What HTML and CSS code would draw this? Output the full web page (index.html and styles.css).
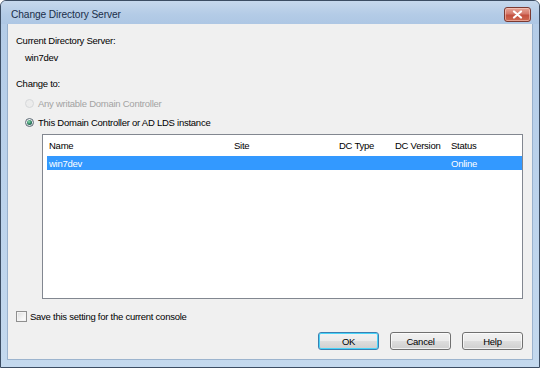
FILE: index.html
```html
<!DOCTYPE html>
<html>
<head>
<meta charset="utf-8">
<link rel="stylesheet" href="styles.css">
</head>
<body>
<div class="window">
  <div class="titlebar">
    <span class="title">Change Directory Server</span>
    <span class="close"><svg width="11" height="9" viewBox="0 0 11 9"><path d="M2 1.5 L9 7.5 M9 1.5 L2 7.5" stroke="#fff" stroke-width="2.2" stroke-linecap="round"/></svg></span>
  </div>
  <div class="client">
    <div class="line">Current Directory Server:</div>
    <div class="line value">win7dev</div>
    <div class="line change">Change to:</div>
    <div class="radio-row disabled"><span class="radio"></span><span>Any writable Domain Controller</span></div>
    <div class="radio-row second"><span class="radio checked"><span class="dot"></span></span><span>This Domain Controller or AD LDS instance</span></div>
    <div class="listbox">
      <div class="lv-row header">
        <span class="c-name">Name</span><span class="c-site">Site</span><span class="c-type">DC Type</span><span class="c-ver">DC Version</span><span class="c-status">Status</span>
      </div>
      <div class="lv-row selected">
        <span class="c-name">win7dev</span><span class="c-site"></span><span class="c-type"></span><span class="c-ver"></span><span class="c-status">Online</span>
      </div>
    </div>
    <div class="check-row"><span class="checkbox"></span><span>Save this setting for the current console</span></div>
    <div class="buttons">
      <button class="btn default">OK</button>
      <button class="btn">Cancel</button>
      <button class="btn">Help</button>
    </div>
  </div>
</div>
</body>
</html>
```
FILE: styles.css
```css
html, body {
  margin: 0;
  padding: 0;
  width: 540px;
  height: 368px;
  overflow: hidden;
  background: #fff;
}
.window {
  box-sizing: border-box;
  width: 540px;
  height: 368px;
  border: 1px solid #3c4d63;
  border-radius: 6px 6px 0 0;
  background: linear-gradient(to bottom, #bed3ea 0px, #b4cce7 24px, #bcd3ec 200px, #c4d9ee 100%);
  display: flex;
  flex-direction: column;
  font-family: "Liberation Sans", Arial, sans-serif;
  font-size: 9.5px;
  letter-spacing: -0.25px;
  color: #000;
}
.titlebar {
  height: 23px;
  flex: none;
  display: flex;
  align-items: center;
  padding: 0 0 0 10px;
  position: relative;
  background: linear-gradient(to bottom, #c6d8ec 0%, #b3cbe6 60%, #aec7e4 100%);
  border-radius: 5px 5px 0 0;
}
.title {
  font-size: 10.2px;
  letter-spacing: -0.1px;
  color: #1b2f4a;
  margin-top: 4px;
}
.close {
  position: absolute;
  left: 503px;
  top: 6px;
  width: 25px;
  height: 13px;
  border: 1px solid #7b3a32;
  border-radius: 3px;
  background: linear-gradient(to bottom, #e7a596 0%, #d5786a 45%, #c3503f 55%, #cf6a52 100%);
  display: flex;
  align-items: center;
  justify-content: center;
  box-shadow: inset 0 0 0 1px rgba(255,220,210,0.5);
}
.client {
  flex: 1;
  margin: 0 7px 8px 7px;
  background: #f0f0f0;
  border: 1px solid #8ea6c2;
  border-width: 0;
  box-shadow: 0 0 0 1px rgba(130,155,185,0.6);
  padding: 10px 9px 9px 8px;
  display: flex;
  flex-direction: column;
}
.line {
  height: 13px;
  line-height: 13px;
}
.value {
  margin-top: 4px;
  padding-left: 9px;
}
.change {
  margin-top: 13px;
}
.radio-row {
  height: 14px;
  display: flex;
  align-items: center;
  margin-top: 6px;
  padding-left: 9px;
}
.radio-row.second {
  margin-top: 5px;
}
.radio-row.disabled {
  color: #a3a3a3;
}
.radio {
  box-sizing: border-box;
  width: 9px;
  height: 9px;
  border-radius: 50%;
  border: 1px solid #a8acb2;
  background: radial-gradient(circle at 40% 35%, #ffffff 0%, #e4e6e8 70%, #d0d3d6 100%);
  margin-right: 4px;
  display: flex;
  align-items: center;
  justify-content: center;
}
.radio-row.disabled .radio {
  border-color: #d6d8da;
  background: #ececec;
}
.radio.checked {
  border-color: #5b6a74;
}
.dot {
  width: 5px;
  height: 5px;
  border-radius: 50%;
  background: radial-gradient(circle at 40% 35%, #8fe0b0 0%, #2a7a5c 55%, #173e44 100%);
}
.listbox {
  margin: 5px 0 0 26px;
  height: 165px;
  box-sizing: border-box;
  border: 1px solid #828790;
  background: #fff;
  flex: none;
}
.lv-row {
  display: flex;
  align-items: center;
}
.lv-row span {
  box-sizing: border-box;
  padding-left: 6px;
  white-space: nowrap;
}
.header {
  height: 21px;
}
.selected {
  height: 14px;
  margin: 0 0 0 4px;
  background: #3399ff;
  color: #fff;
}
.c-name { width: 185px; }
.c-site { width: 105px; }
.c-type { width: 56px; }
.c-ver { width: 56px; }
.c-status { flex: 1; }
.selected .c-name { width: 181px; padding-left: 2px; }
.check-row {
  margin-top: 10px;
  height: 14px;
  display: flex;
  align-items: center;
}
.checkbox {
  box-sizing: border-box;
  width: 11px;
  height: 11px;
  border: 1px solid #8f8f8f;
  background: linear-gradient(135deg, #dcdcdc 0%, #f4f4f4 60%, #ffffff 100%);
  box-shadow: inset 0 0 0 1px #f4f4f4;
  margin-right: 3px;
}
.buttons {
  margin-top: auto;
  display: flex;
  justify-content: flex-end;
  gap: 11px;
}
.btn {
  box-sizing: border-box;
  width: 61px;
  height: 18px;
  padding: 0;
  border: 1px solid #707070;
  border-radius: 3px;
  background: linear-gradient(to bottom, #f2f2f2 0%, #ebebeb 48%, #dddddd 52%, #cfcfcf 100%);
  box-shadow: inset 0 0 0 1px rgba(255,255,255,0.7);
  font-family: "Liberation Sans", Arial, sans-serif;
  font-size: 9.5px;
  letter-spacing: -0.25px;
  color: #000;
}
.btn.default {
  border-color: #3c7fb1;
  box-shadow: inset 0 0 0 1px #48d4f9;
}
```
